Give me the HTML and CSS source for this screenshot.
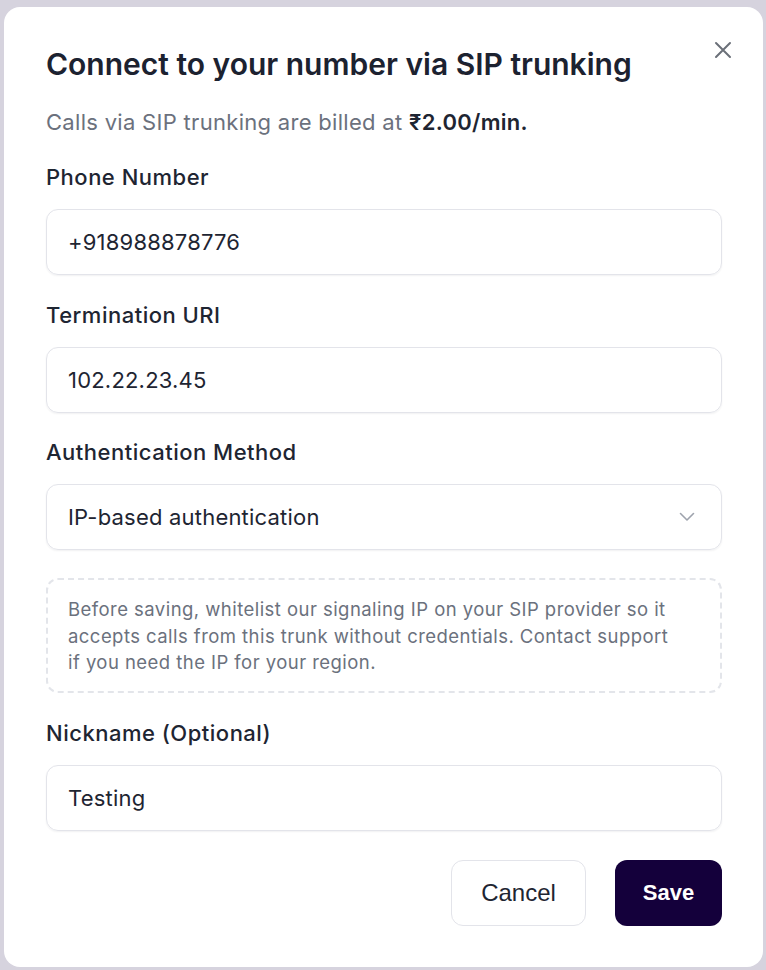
FILE: index.html
```html
<!DOCTYPE html>
<html lang="en">
<head>
<meta charset="utf-8">
<title>Connect via SIP trunking</title>
<link rel="stylesheet" href="styles.css">
</head>
<body>
<div class="modal">
  <button class="close" aria-label="Close">
    <svg width="18" height="18" viewBox="0 0 18 18"><path d="M2 2 L16 16 M16 2 L2 16" stroke="#6b7079" stroke-width="2" stroke-linecap="round" fill="none"/></svg>
  </button>
  <h1 class="title">Connect to your number via SIP trunking</h1>
  <p class="subtitle">Calls via SIP trunking are billed at <strong>₹2.00/min.</strong></p>

  <label class="label">Phone Number</label>
  <div class="field">+918988878776</div>

  <label class="label">Termination URI</label>
  <div class="field">102.22.23.45</div>

  <label class="label">Authentication Method</label>
  <div class="field select">
    <span>IP-based authentication</span>
    <svg width="16" height="10" viewBox="0 0 16 10"><path d="M1.5 1.5 L8 8 L14.5 1.5" stroke="#9ea3ad" stroke-width="1.6" stroke-linecap="round" stroke-linejoin="round" fill="none"/></svg>
  </div>

  <div class="note">Before saving, whitelist our signaling IP on your SIP provider so it accepts calls from this trunk without credentials. Contact support if you need the IP for your region.</div>

  <label class="label">Nickname (Optional)</label>
  <div class="field">Testing</div>

  <div class="actions">
    <button class="btn cancel">Cancel</button>
    <button class="btn save">Save</button>
  </div>
</div>
</body>
</html>
```

FILE: styles.css
```css
html, body {
  margin: 0;
  padding: 0;
}
body {
  background: #d6d3de;
  font-family: Inter, "Noto Sans", sans-serif;
  color: #1e2532;
}
.modal {
  position: relative;
  box-sizing: border-box;
  margin: 7px 3px 0 4px;
  height: 960px;
  background: #ffffff;
  border-radius: 16px;
  padding: 38px 41px 0 42px;
  display: flex;
  flex-direction: column;
}
.close {
  position: absolute;
  top: 34px;
  right: 31px;
  border: 0;
  background: none;
  padding: 0;
  width: 18px;
  height: 18px;
  display: flex;
}
.title {
  margin: 0;
  font-size: 30px;
  line-height: 38px;
  font-weight: 600;
  color: #1c2230;
  letter-spacing: 0;
}
.subtitle {
  margin: 25px 0 0;
  font-size: 22px;
  line-height: 28px;
  color: #6b717d;
  letter-spacing: 0.3px;
}
.subtitle strong {
  font-weight: 600;
  color: #1e2532;
}
.label {
  margin-top: 27px;
  font-size: 22px;
  line-height: 28px;
  font-weight: 500;
  color: #1e2532;
  letter-spacing: 0.5px;
}
.field {
  margin-top: 18px;
  box-sizing: border-box;
  height: 66px;
  border: 1px solid #e3e4ea;
  border-radius: 12px;
  box-shadow: 0 1px 2px rgba(20, 20, 40, 0.06);
  padding: 0 21px;
  display: flex;
  align-items: center;
  font-size: 22px;
  letter-spacing: 0.2px;
  color: #1e2532;
}
.field + .label {
  margin-top: 25.5px;
}
.select {
  justify-content: space-between;
  padding-right: 26px;
}
.note {
  margin-top: 28px;
  box-sizing: border-box;
  height: 115px;
  border: 2px dashed #e3e5ea;
  border-radius: 12px;
  padding: 16px 40px 16px 20px;
  font-size: 18.5px;
  line-height: 26.5px;
  letter-spacing: 0.45px;
  color: #6b717d;
}
.note + .label {
  margin-top: 26px;
}
.actions {
  margin-top: 29px;
  display: flex;
  justify-content: flex-end;
  gap: 29px;
}
.btn {
  height: 66px;
  border-radius: 12px;
  font-family: "Liberation Sans", Arial, sans-serif;
  cursor: pointer;
}
.cancel {
  width: 135px;
  background: #ffffff;
  border: 1px solid #e3e4ea;
  color: #1e2532;
  font-size: 24px;
}
.save {
  width: 107px;
  background: #14003b;
  border: 0;
  color: #ffffff;
  font-size: 22px;
  font-weight: 700;
}
```
